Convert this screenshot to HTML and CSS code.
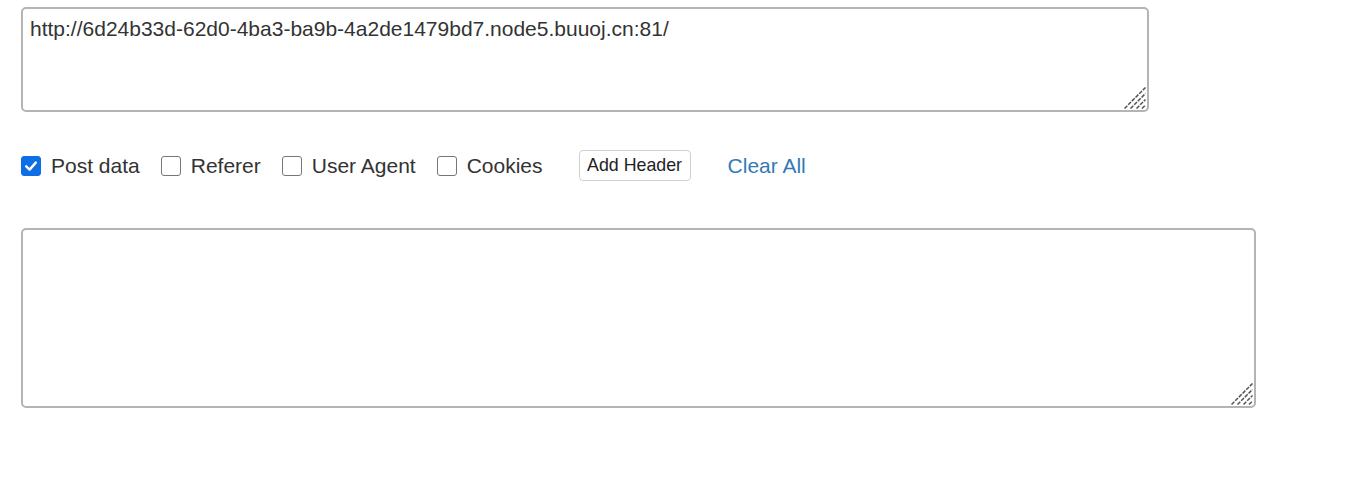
FILE: index.html
```html
<!DOCTYPE html>
<html>
<head>
<meta charset="utf-8">
<link rel="stylesheet" href="styles.css">
</head>
<body>
<div class="page">
  <div class="field field-url">
    <textarea class="box box-url">http://6d24b33d-62d0-4ba3-ba9b-4a2de1479bd7.node5.buuoj.cn:81/</textarea>
    <svg class="grip" width="22" height="22" viewBox="0 0 22 22">
      <g stroke="#555555" stroke-width="1.5" stroke-dasharray="4 1.2">
        <line x1="0.5" y1="21.5" x2="21.5" y2="0.5"/>
        <line x1="6.5" y1="21.5" x2="21.5" y2="6.5"/>
        <line x1="12.5" y1="21.5" x2="21.5" y2="12.5"/>
        <line x1="18" y1="21.5" x2="21.5" y2="18"/>
      </g>
    </svg>
  </div>

  <div class="options">
    <label class="opt">
      <span class="check checked">
        <svg width="14" height="14" viewBox="0 0 14 14"><path d="M2.2 7.3 L5.6 10.6 L11.8 3.6" fill="none" stroke="#fff" stroke-width="2.4" stroke-linecap="round" stroke-linejoin="round"/></svg>
      </span>
      <span class="opt-text">Post data</span>
    </label>
    <label class="opt">
      <span class="check"></span>
      <span class="opt-text">Referer</span>
    </label>
    <label class="opt">
      <span class="check"></span>
      <span class="opt-text">User Agent</span>
    </label>
    <label class="opt">
      <span class="check"></span>
      <span class="opt-text">Cookies</span>
    </label>
    <button class="btn">Add Header</button>
    <a class="link" href="#">Clear All</a>
  </div>

  <div class="field field-post">
    <textarea class="box box-post"></textarea>
    <svg class="grip" width="22" height="22" viewBox="0 0 22 22">
      <g stroke="#555555" stroke-width="1.5" stroke-dasharray="4 1.2">
        <line x1="0.5" y1="21.5" x2="21.5" y2="0.5"/>
        <line x1="6.5" y1="21.5" x2="21.5" y2="6.5"/>
        <line x1="12.5" y1="21.5" x2="21.5" y2="12.5"/>
        <line x1="18" y1="21.5" x2="21.5" y2="18"/>
      </g>
    </svg>
  </div>
</div>
</body>
</html>
```

FILE: styles.css
```css
html, body {
  margin: 0;
  padding: 0;
  background: #ffffff;
}

.page {
  padding: 7px 0 0 21px;
  font-family: "Liberation Sans", Arial, sans-serif;
  color: #333333;
}

.field {
  position: relative;
}

.field-url {
  width: 1128px;
  height: 105px;
}

.field-post {
  width: 1235px;
  height: 180px;
  margin-top: 47px;
}

.box {
  box-sizing: border-box;
  width: 100%;
  height: 100%;
  display: block;
  margin: 0;
  border: 2px solid #b4b4b4;
  border-radius: 5px;
  padding: 8px 7px;
  font-family: "Liberation Sans", Arial, sans-serif;
  font-size: 21px;
  line-height: 24px;
  color: #333333;
  background: #ffffff;
  resize: none;
  outline: none;
}

.grip {
  position: absolute;
  right: 3px;
  bottom: 3px;
}

.options {
  display: flex;
  align-items: center;
  margin-top: 38px;
  height: 31px;
}

.opt {
  display: flex;
  align-items: center;
  margin-right: 21px;
  font-size: 21px;
  color: #333333;
}

.opt:nth-child(4) {
  margin-right: 36px;
}

.check {
  box-sizing: border-box;
  width: 20px;
  height: 20px;
  border: 1px solid #767676;
  border-radius: 3px;
  background: #ffffff;
  margin-right: 10px;
  display: flex;
  align-items: center;
  justify-content: center;
}

.check.checked {
  background: #0e6ee6;
  border-color: #0e6ee6;
}

.check svg {
  display: block;
}

.opt-text {
  line-height: 24px;
}

.btn {
  box-sizing: border-box;
  width: 112px;
  height: 31px;
  padding: 0;
  border: 1px solid #d0d0d0;
  border-radius: 4px;
  background: #ffffff;
  font-family: "Liberation Sans", Arial, sans-serif;
  font-size: 17.8px;
  color: #222222;
  margin-right: 37px;
}

.link {
  font-size: 21px;
  color: #337ab7;
  text-decoration: none;
}
```
